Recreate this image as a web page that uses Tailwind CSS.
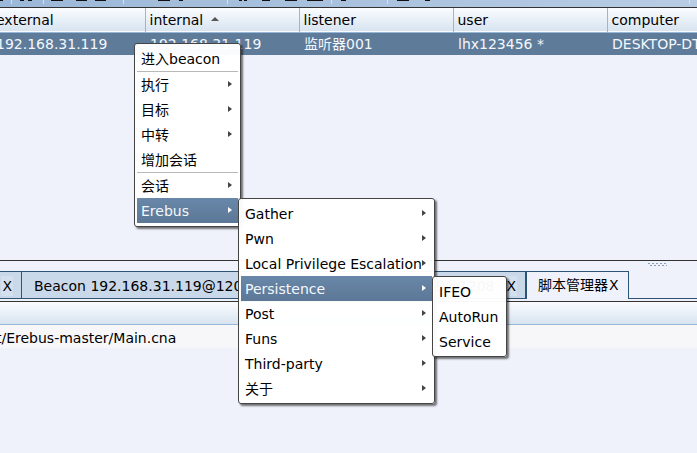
<!DOCTYPE html>
<html lang="zh">
<head>
<meta charset="utf-8">
<title>Sessions</title>
<script src="https://cdn.jsdelivr.net/npm/@tailwindcss/browser@4"></script>
</head>
<body class="relative h-screen overflow-hidden bg-[#eff2fb] font-['DejaVu_Sans','Noto_Sans_CJK_SC',sans-serif] text-sm text-black">
<div class="flex h-full flex-col">
  <header class="h-[7px] shrink-0 overflow-hidden bg-linear-to-r from-[#9cb8d8] to-[#b8cce4]">
    <svg class="block" width="697" height="7" aria-hidden="true">
      <path fill="#111" d="M0 0h3v1H0zM20 0h4v1h-4zM28 0h4v1h-4zM51 0h12v1H51zM76 0h11v1H76zM95 0h11v1H95zM158 0h12v1h-12zM179 0h4v1h-4zM239 0h3v1h-3zM244 0h3v1h-3zM262 0h8v1h-8zM285 0h12v1h-12zM307 0h16v1h-16zM341 0h5v1h-5zM397 0h12v1h-12zM425 0h5v1h-5z"/>
      <path d="M11.500 0v4M43.500 0v4M123.500 0v4M227.500 0v4M331.500 0v4M387.500 0v4M689.500 0v4" stroke="#d4e2f2"/>
    </svg>
  </header>
  <main class="h-[254px] shrink-0 overflow-hidden border-y border-[#333]">
    <table class="w-full table-fixed border-collapse">
      <colgroup><col class="w-[145px]"><col class="w-[154px]"><col class="w-[154px]"><col class="w-[154px]"><col></colgroup>
      <thead>
        <tr class="h-6 border-b border-[#96b7d8] bg-linear-to-b from-[#fafcff] to-[#d8e4f0] text-left">
          <th class="border-r border-[#96b7d8] p-0 font-normal"><span class="-ml-1">external</span></th>
          <th class="border-r border-[#96b7d8] px-1 py-0 font-normal"><span class="flex items-center gap-2">internal <svg width="8" height="4" class="mb-0.5" aria-hidden="true"><path d="M0 4L4 0l4 4z" fill="#555"/></svg></span></th>
          <th class="border-r border-[#96b7d8] px-1 py-0 font-normal">listener</th>
          <th class="border-r border-[#96b7d8] px-1 py-0 font-normal">user</th>
          <th class="px-1 py-0 font-normal">computer</th>
        </tr>
      </thead>
      <tbody>
        <tr class="h-[23px] whitespace-nowrap bg-[#5f7b9a] leading-5 text-[#f4f8fc]">
          <td class="p-0"><span class="-ml-1">192.168.31.119</span></td>
          <td class="px-[5px] py-0">192.168.31.119</td>
          <td class="px-[5px] py-0">监听器001</td>
          <td class="px-[5px] py-0">lhx123456 *</td>
          <td class="overflow-hidden px-[5px] py-0">DESKTOP-DTK</td>
        </tr>
      </tbody>
    </table>
  </main>
  <div class="flex h-[10px] shrink-0 justify-end pr-[30px] pt-[2px]">
    <svg width="19" height="4" aria-hidden="true"><path d="M0 .5h19" stroke="#8aa0b8" stroke-dasharray="2 2"/><path d="M2 2.500h17" stroke="#8aa0b8" stroke-dasharray="2 2"/></svg>
  </div>
  <nav class="flex h-7 shrink-0 whitespace-nowrap">
    <div class="flex w-[22px] items-center justify-end border-y border-r border-[#2d5474] bg-[#cad9ea] pr-2 pt-[2px]"><button class="bg-white/20 px-px" aria-label="Close">X</button></div>
    <div class="flex w-[263px] items-center justify-between border-y border-r border-[#2d5474] bg-[#cad9ea] pl-3 pr-2 pt-[2px]"><button>Beacon 192.168.31.119@1208</button><button class="bg-white/20 px-px" aria-label="Close Beacon">X</button></div>
    <div class="flex w-[242px] items-center justify-between border-y border-r-2 border-[#2d5474] bg-[#cad9ea] pl-[10px] pr-2 pt-[2px]"><button>Beacon 192.168.31.9@1208</button><button class="bg-white/20 px-px" aria-label="Close Beacon">X</button></div>
    <div class="flex w-[102px] items-center border-r border-t border-[#2d5474] pb-[2px] pl-[11px]"><button class="leading-5">脚本管理器</button><button class="px-px" aria-label="Close script manager">X</button></div>
    <div class="grow border-b border-[#2d5474]"></div>
  </nav>
  <section class="mt-[2px] border-t border-[#333]">
    <div class="h-[23px] border-b border-[#96b7d8] bg-linear-to-b from-[#fafcff] to-[#d8e4f0]"></div>
    <p class="h-[23px] bg-[#f7f7fa] leading-[26px]"><span class="-ml-1">t/Erebus-master/Main.cna</span></p>
  </section>
</div>

<ul role="menu" class="absolute left-[134px] top-[43px] w-[107px] rounded-[3px] border border-[#444] bg-white/97 px-[2px] py-[3px] shadow-[2px_2px_2px_#0008]">
  <li><button role="menuitem" class="flex h-6 w-full items-center px-1">进入beacon</button></li>
  <li class="border-t border-[#b8b8b8]"><button role="menuitem" class="flex h-[25px] w-full items-center justify-between pl-1 pr-[6px] pt-px">执行<svg width="4" height="6" class="mb-0.5 shrink-0"><path d="M0 0l4 3-4 3z" fill="#444"/></svg></button></li>
  <li><button role="menuitem" class="flex h-[25px] w-full items-center justify-between pl-1 pr-[6px] pt-px">目标<svg width="4" height="6" class="mb-0.5 shrink-0"><path d="M0 0l4 3-4 3z" fill="#444"/></svg></button></li>
  <li><button role="menuitem" class="flex h-[25px] w-full items-center justify-between pl-1 pr-[6px] pt-px">中转<svg width="4" height="6" class="mb-0.5 shrink-0"><path d="M0 0l4 3-4 3z" fill="#444"/></svg></button></li>
  <li><button role="menuitem" class="flex h-[25px] w-full items-center pl-1 pt-px">增加会话</button></li>
  <li class="border-t border-[#b8b8b8]"><button role="menuitem" class="flex h-[25px] w-full items-center justify-between pl-1 pr-[6px] pt-px">会话<svg width="4" height="6" class="mb-0.5 shrink-0"><path d="M0 0l4 3-4 3z" fill="#444"/></svg></button></li>
  <li><button role="menuitem" class="flex h-[25px] w-full items-center justify-between bg-linear-to-b from-[#6987a8] to-[#5c7897] pl-1 pr-[6px] pt-px text-[#f4f8fc]">Erebus<svg width="4" height="6" class="mb-0.5 shrink-0"><path d="M0 0l4 3-4 3z" fill="#fff"/></svg></button></li>
</ul>

<ul role="menu" class="absolute left-[238px] top-[198px] w-[197px] whitespace-nowrap rounded-[3px] border border-[#444] bg-white/97 px-[2px] py-[2px] shadow-[2px_2px_2px_#0008]">
  <li><button role="menuitem" class="flex h-[25px] w-full items-center justify-between pl-1 pr-[6px] pt-px">Gather<svg width="4" height="6" class="mb-0.5 shrink-0"><path d="M0 0l4 3-4 3z" fill="#444"/></svg></button></li>
  <li><button role="menuitem" class="flex h-[25px] w-full items-center justify-between pl-1 pr-[6px] pt-px">Pwn<svg width="4" height="6" class="mb-0.5 shrink-0"><path d="M0 0l4 3-4 3z" fill="#444"/></svg></button></li>
  <li><button role="menuitem" class="flex h-[25px] w-full items-center justify-between pl-1 pr-[6px] pt-px">Local Privilege Escalation<svg width="4" height="6" class="mb-0.5 shrink-0"><path d="M0 0l4 3-4 3z" fill="#444"/></svg></button></li>
  <li><button role="menuitem" class="flex h-[25px] w-full items-center justify-between bg-linear-to-b from-[#6987a8] to-[#5c7897] pl-1 pr-[6px] pt-px text-[#f4f8fc]">Persistence<svg width="4" height="6" class="mb-0.5 shrink-0"><path d="M0 0l4 3-4 3z" fill="#fff"/></svg></button></li>
  <li><button role="menuitem" class="flex h-[25px] w-full items-center justify-between pl-1 pr-[6px] pt-px">Post<svg width="4" height="6" class="mb-0.5 shrink-0"><path d="M0 0l4 3-4 3z" fill="#444"/></svg></button></li>
  <li><button role="menuitem" class="flex h-[25px] w-full items-center justify-between pl-1 pr-[6px] pt-px">Funs<svg width="4" height="6" class="mb-0.5 shrink-0"><path d="M0 0l4 3-4 3z" fill="#444"/></svg></button></li>
  <li><button role="menuitem" class="flex h-[25px] w-full items-center justify-between pl-1 pr-[6px] pt-px">Third-party<svg width="4" height="6" class="mb-0.5 shrink-0"><path d="M0 0l4 3-4 3z" fill="#444"/></svg></button></li>
  <li><button role="menuitem" class="flex h-[25px] w-full items-center justify-between pl-1 pr-[6px] pt-px">关于<svg width="4" height="6" class="mb-0.5 shrink-0"><path d="M0 0l4 3-4 3z" fill="#444"/></svg></button></li>
</ul>

<ul role="menu" class="absolute left-[432px] top-[276px] w-[75px] rounded-[3px] border border-[#444] bg-white/97 px-[2px] py-[2px] shadow-[2px_2px_2px_#0008]">
  <li><button role="menuitem" class="flex h-[25px] w-full items-center pl-1 pt-px">IFEO</button></li>
  <li><button role="menuitem" class="flex h-[25px] w-full items-center pl-1 pt-px">AutoRun</button></li>
  <li><button role="menuitem" class="flex h-[25px] w-full items-center pl-1 pt-px">Service</button></li>
</ul>
</body>
</html>
